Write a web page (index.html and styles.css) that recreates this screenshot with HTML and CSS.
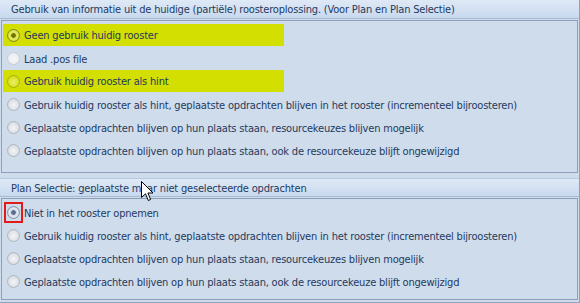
FILE: index.html
```html
<!DOCTYPE html>
<html>
<head>
<meta charset="utf-8">
<link rel="stylesheet" href="styles.css">
</head>
<body>
<div class="page">
  <section class="group group-top">
    <div class="header">Gebruik van informatie uit de huidige (partiële) roosteroplossing. (Voor Plan en Plan Selectie)</div>
    <div class="content content-top">
      <div class="row hl"><span class="radio checked-yellow"></span><span>Geen gebruik huidig rooster</span></div>
      <div class="row"><span class="radio disabled"></span><span>Laad .pos file</span></div>
      <div class="row hl"><span class="radio yellow"></span><span>Gebruik huidig rooster als hint</span></div>
      <div class="row"><span class="radio"></span><span>Gebruik huidig rooster als hint, geplaatste opdrachten blijven in het rooster (incrementeel bijroosteren)</span></div>
      <div class="row"><span class="radio"></span><span>Geplaatste opdrachten blijven op hun plaats staan, resourcekeuzes blijven mogelijk</span></div>
      <div class="row"><span class="radio"></span><span>Geplaatste opdrachten blijven op hun plaats staan, ook de resourcekeuze blijft ongewijzigd</span></div>
    </div>
  </section>
  <section class="group group-bottom">
    <div class="header">Plan Selectie: geplaatste maar niet geselecteerde opdrachten</div>
    <div class="content content-bottom">
      <div class="row"><span class="focus"><span class="radio checked-blue"></span></span><span>Niet in het rooster opnemen</span></div>
      <div class="row"><span class="radio"></span><span>Gebruik huidig rooster als hint, geplaatste opdrachten blijven in het rooster (incrementeel bijroosteren)</span></div>
      <div class="row"><span class="radio"></span><span>Geplaatste opdrachten blijven op hun plaats staan, resourcekeuzes blijven mogelijk</span></div>
      <div class="row"><span class="radio"></span><span>Geplaatste opdrachten blijven op hun plaats staan, ook de resourcekeuze blijft ongewijzigd</span></div>
    </div>
  </section>
  <svg class="cursor" width="13" height="21" viewBox="0 0 13 21">
    <path d="M0.5 0.5 L0.5 16.5 L4.5 12.8 L7.3 19.5 L9.6 18.5 L6.9 12 L12 12 Z" fill="#fff" stroke="#000" stroke-width="1" stroke-linejoin="miter"/>
  </svg>
</div>
</body>
</html>
```
FILE: styles.css
```css
html, body {
  margin: 0;
  padding: 0;
  background: #cfdcec;
}
body {
  font-family: "DejaVu Sans Condensed", "DejaVu Sans", sans-serif;
  font-size: 11px;
  letter-spacing: -0.19px;
  color: #1f3a5e;
}
.page {
  position: relative;
  width: 579px;
  height: 302px;
  border-right: 1px solid #8fa2bd;
  border-bottom: 1px solid #8fa2bd;
  display: flex;
  flex-direction: column;
  gap: 5px;
  overflow: hidden;
}
.group {
  margin-left: 1px;
  width: 577px;
  display: flex;
  flex-direction: column;
}
.header {
  height: 19px;
  line-height: 20px;
  box-sizing: border-box;
  padding-left: 11px;
  margin-left: -1px;
  width: 579px;
  background: linear-gradient(#dfe9f6, #c8d9ef);
  border-top: 1px solid #b7c9e0;
  border-bottom: 1px solid #a7bad4;
  white-space: nowrap;
}
.group-top .header { border-top: none; height: 19px; }
.content {
  margin-top: 1px;
  border: 1px solid #8d9fba;
  box-sizing: border-box;
  padding-left: 1px;
}
.content-top {
  height: 153px;
  padding-top: 3px;
}
.content-bottom {
  height: 102px;
  padding-top: 2px;
}
.row {
  height: 23px;
  display: flex;
  align-items: center;
  gap: 4px;
  padding-left: 4px;
  width: 281px;
  white-space: nowrap;
  box-sizing: border-box;
}
.row span:last-child {
  padding-top: 1px;
}
.row.hl {
  background: #d3df00;
  height: 22px;
  margin-bottom: 1px;
}
.radio {
  flex: none;
  width: 13px;
  height: 13px;
  box-sizing: border-box;
  border-radius: 50%;
  border: 1px solid #b0b6be;
  background: radial-gradient(circle at 50% 55%, #f4f5f7 0, #e3e6ea 45%, #cdd2d8 100%);
}
.radio.disabled {
  border-color: #c9ced5;
  background: radial-gradient(circle at 50% 55%, #f5f6f8 0, #eceef1 60%, #dcdfe4 100%);
}
.radio.yellow {
  border-color: #aab010;
  background: radial-gradient(circle at 50% 55%, #e9ef70 0, #dbe42a 55%, #c7cf05 100%);
}
.radio.checked-yellow {
  border-color: #858a12;
  background: radial-gradient(circle, #6f730c 0, #6f730c 2px, #d7df3a 2.6px, #e4ea68 4px, #b6bd12 100%);
}
.radio.checked-blue {
  border-color: #8495ad;
  background: radial-gradient(circle, #5a6e8f 0, #5a6e8f 2px, #c9d3e0 2.6px, #e5eaf1 4px, #a8b5c8 100%);
}
.focus {
  flex: none;
  display: flex;
  align-items: center;
  justify-content: center;
  width: 19px;
  height: 21px;
  box-sizing: border-box;
  border: 2px solid #e21a1a;
  margin-left: -3px;
  margin-right: -3px;
}
.cursor {
  position: absolute;
  left: 141px;
  top: 181px;
}
```
